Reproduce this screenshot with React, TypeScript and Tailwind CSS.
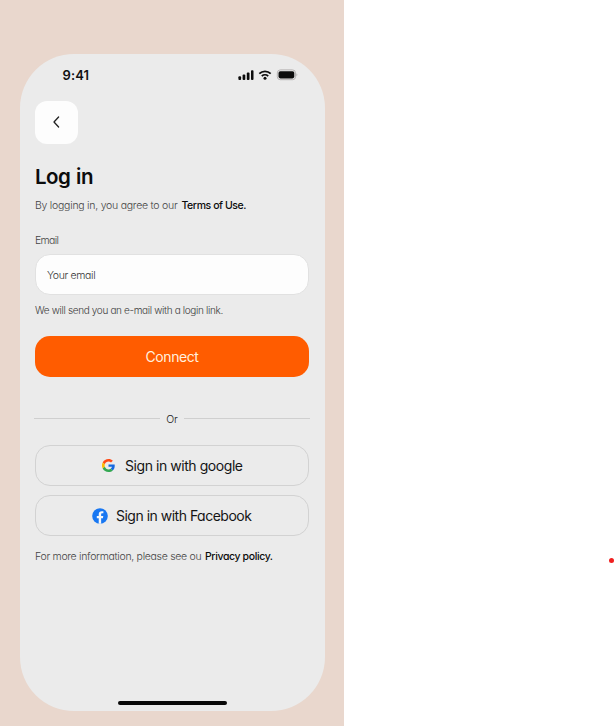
import React from "react";

function StatusBar() {
  return (
    <div className="flex h-[47px] items-center justify-between pr-[27px] pl-[42.5px]">
      <span className="mt-[-5px] text-[13px] font-semibold tracking-[0.1px] leading-[16px] text-[#111]">9:41</span>
      <svg className="mt-[-5px]" width="60" height="12" viewBox="0 0 60 12">
        <g fill="#0c0c0c">
          <rect x="0.4" y="7.3" width="2.7" height="3.7" rx="0.9" />
          <rect x="4.6" y="5.6" width="2.7" height="5.4" rx="0.9" />
          <rect x="8.8" y="3.5" width="2.7" height="7.5" rx="0.9" />
          <rect x="13" y="1.2" width="2.5" height="9.8" rx="0.9" />
          <circle cx="27" cy="9.3" r="1.5" />
        </g>
        <path d="M21.3 4.6a8.2 8.2 0 0 1 11.4 0M23.8 7.1a4.7 4.7 0 0 1 6.4 0" fill="none" stroke="#0c0c0c" strokeWidth="1.8" />
        <rect x="39.3" y="0.9" width="18.2" height="9.8" rx="3" fill="none" stroke="#b5b2b2" strokeWidth="1" />
        <rect x="40.5" y="2.2" width="15.8" height="7.2" rx="1.8" fill="#0c0c0c" />
        <path d="M58.5 4.2q1.6 1.6 0 3.2z" fill="#aaa" />
      </svg>
    </div>
  );
}

function GoogleIcon() {
  return (
    <svg width="13" height="13" viewBox="0 0 48 48">
      <path fill="#ff4b17" d="M24 9.5c3.54 0 6.71 1.22 9.21 3.6l6.85-6.85C35.9 2.38 30.47 0 24 0 14.62 0 6.51 5.38 2.56 13.22l7.98 6.19C12.43 13.72 17.74 9.5 24 9.5z" />
      <path fill="#1769e0" d="M46.98 24.55c0-1.57-.15-3.09-.38-4.55H24v9.02h12.94c-.58 2.96-2.26 5.48-4.78 7.18l7.73 6c4.51-4.18 7.09-10.36 7.09-17.65z" />
      <path fill="#fbbc05" d="M10.53 28.59a14.5 14.5 0 0 1 0-9.18l-7.98-6.19a24 24 0 0 0 0 21.56l7.98-6.19z" />
      <path fill="#34a853" d="M24 48c6.48 0 11.93-2.13 15.89-5.81l-7.73-6c-2.15 1.45-4.92 2.3-8.16 2.3-6.26 0-11.57-4.22-13.47-9.91l-7.98 6.19C6.51 42.62 14.62 48 24 48z" />
    </svg>
  );
}

function FacebookIcon() {
  return (
    <svg width="16" height="16" viewBox="0 0 24 24">
      <circle cx="12" cy="12" r="11.7" fill="#1877f2" />
      <path fill="#f4f7fb" d="M10.1 23.6v-8.2H7.2V12h2.9V9.4c0-3 1.8-4.7 4.5-4.7 1.3 0 2.5.2 2.5.2v3h-1.5c-1.5 0-1.9.9-1.9 1.8V12h3.2l-.5 3.4h-2.7v8.2z" />
    </svg>
  );
}

export default function App() {
  return (
    <div className="flex h-[726px] w-[615px] overflow-hidden bg-white font-['Inter',sans-serif] [font-feature-settings:'cv11']">
      <main className="h-full w-[344px] bg-[#e9d7cd] pt-[54px] pl-[20px]">
        <section className="flex h-[656.5px] w-[304.5px] flex-col rounded-[54px] bg-[#ebebeb]">
          <StatusBar />
          <div className="flex flex-col pr-[15px] pl-[15px]">
            <button className="flex size-[42.5px] items-center justify-center rounded-[12px] bg-[#fdfdfd]">
              <svg className="-ml-px" width="8" height="12" viewBox="0 0 8 12" fill="none" stroke="#222" strokeWidth="1.3">
                <path d="M6.6 1 2 6l4.6 5" strokeLinecap="round" strokeLinejoin="round" />
              </svg>
            </button>
            <h1 className="mt-[17.5px] h-[32px] text-[20.5px] leading-[32px] font-semibold tracking-[-0.5px] [word-spacing:1px] whitespace-nowrap text-[#0c0c0c]">Log in</h1>
            <p className="mt-[5px] h-[16px] text-[10.5px] leading-[16px] whitespace-nowrap">
              <span className="inline-block w-[146.5px] font-light tracking-[-0.25px] text-[#444]">By logging in, you agree to our</span>
              <span className="font-medium tracking-[-0.42px] text-[#0c0c0c]">Terms of Use.</span>
            </p>
            <label className="mt-[19px] h-[16px] text-[10.5px] leading-[16px] font-light tracking-[-0.7px] text-[#444]">Email</label>
            <div className="mt-[5px] flex h-[41px] w-[274px] items-center rounded-[15px] border border-[#e1e1e1] bg-[#fdfdfd] pl-[11px] text-[10.5px] leading-[16px] font-light tracking-[-0.35px] text-[#333]"><span className="mt-[2px]">Your email</span></div>
            <p className="mt-[7px] h-[16px] text-[10px] leading-[16px] font-light tracking-[-0.35px] whitespace-nowrap text-[#3c3c3c]">We will send you an e-mail with a login link.</p>
            <button className="mt-[18px] h-[41px] w-[274px] rounded-[15px] bg-[#ff5c00] text-[14px] tracking-[-0.4px] text-[#fff0df]">Connect</button>
            <div className="mt-[34px] -ml-px flex h-[16px] w-[276px] items-start text-[10.5px] leading-[16px] font-light text-[#222]">
              <span className="mt-[7px] h-px w-[126px] bg-[#cfcfcf]" />
              <span className="mt-px flex-1 text-center">Or</span>
              <span className="mt-[7px] h-px w-[126px] bg-[#cfcfcf]" />
            </div>
            <button className="mt-[18px] flex h-[41px] w-[274px] items-center rounded-[15px] border border-[#d2d2d2] pl-[66px] text-[14px] tracking-[-0.44px] whitespace-nowrap text-[#151515]">
              <GoogleIcon />
              <span className="ml-[10px]">Sign in with google</span>
            </button>
            <button className="mt-[9px] flex h-[41px] w-[274px] items-center rounded-[15px] border border-[#d2d2d2] pl-[56px] text-[14px] tracking-[-0.5px] whitespace-nowrap text-[#151515]">
              <FacebookIcon />
              <span className="ml-[8px]">Sign in with Facebook</span>
            </button>
            <p className="mt-[13px] h-[16px] text-[10.5px] leading-[16px] whitespace-nowrap">
              <span className="inline-block w-[170px] font-light tracking-[-0.3px] text-[#444]">For more information, please see ou</span>
              <span className="font-medium tracking-[-0.38px] text-[#0c0c0c]">Privacy policy.</span>
            </p>
          </div>
          <div className="mt-auto mb-[5.5px] ml-[97.5px] h-[4px] w-[109.5px] rounded-full bg-[#080808]" />
        </section>
      </main>
      <aside className="flex flex-1 justify-end pt-[557.5px] pr-[1.5px]">
        <span className="size-[5px] rounded-full bg-[#f02020]" />
      </aside>
    </div>
  );
}
